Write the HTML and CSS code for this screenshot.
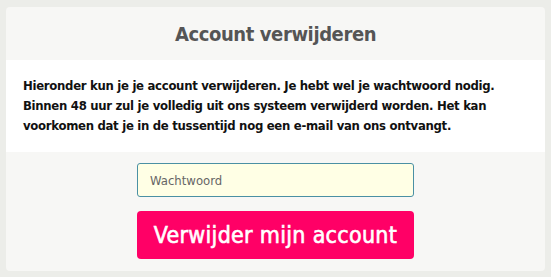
FILE: index.html
```html
<!DOCTYPE html>
<html lang="nl">
<head>
<meta charset="utf-8">
<title>Account verwijderen</title>
<link rel="stylesheet" href="styles.css">
</head>
<body>
<div class="card">
  <div class="card-header">
    <h1 class="title">Account verwijderen</h1>
  </div>
  <div class="card-body">
    <p class="intro">Hieronder kun je je account verwijderen. Je hebt wel je wachtwoord nodig.<br>Binnen 48 uur zul je volledig uit ons systeem verwijderd worden. Het kan<br>voorkomen dat je in de tussentijd nog een e-mail van ons ontvangt.</p>
  </div>
  <form class="card-footer">
    <input class="password" type="password" placeholder="Wachtwoord">
    <button class="delete-btn" type="button">Verwijder mijn account</button>
  </form>
</div>
</body>
</html>
```

FILE: styles.css
```css
html, body {
  margin: 0;
  padding: 0;
}
body {
  background: #ecede9;
  padding: 7px 6px 6px 6px;
  font-family: "DejaVu Sans Condensed", "DejaVu Sans", sans-serif;
}
.card {
  background: #f7f7f5;
  border-radius: 4px;
  overflow: hidden;
  height: 264px;
  display: flex;
  flex-direction: column;
}
.card-header {
  height: 53px;
  display: flex;
  align-items: center;
  justify-content: center;
}
.title {
  margin: 0;
  font-size: 20px;
  font-weight: bold;
  color: #555;
  letter-spacing: -0.4px;
}
.card-body {
  background: #fff;
  height: 92px;
  padding: 0 17px;
  display: flex;
  align-items: center;
}
.intro {
  margin: 0;
  font-size: 13px;
  font-weight: bold;
  line-height: 20px;
  letter-spacing: -0.3px;
  color: #111;
}
.card-footer {
  flex: 1;
  margin: 0;
  padding-top: 11px;
  display: flex;
  flex-direction: column;
  align-items: center;
  gap: 14px;
}
.password {
  box-sizing: border-box;
  width: 277px;
  height: 34px;
  margin: 0;
  border: 1px solid #4a90a4;
  border-radius: 3px;
  background: #ffffe5;
  padding: 0 12px;
  font-family: inherit;
  font-size: 13px;
  color: #333;
  outline: none;
}
.password::placeholder {
  color: #666;
}
.delete-btn {
  width: 277px;
  height: 48px;
  margin: 0;
  border: 0;
  border-radius: 4px;
  background: #ff0066;
  color: #fff;
  font-family: inherit;
  font-size: 23px;
  font-weight: normal;
  letter-spacing: 0.3px;
  -webkit-text-stroke: 0.6px #fff;
  cursor: pointer;
}
```
